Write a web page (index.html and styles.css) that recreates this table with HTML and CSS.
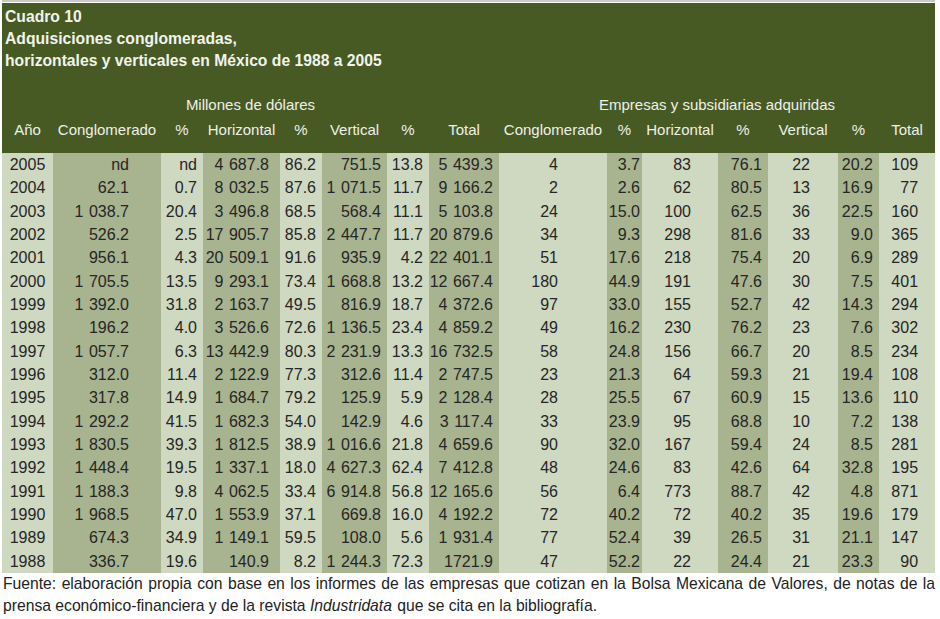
FILE: index.html
```html
<!DOCTYPE html>
<html lang="es">
<head>
<meta charset="utf-8">
<title>Cuadro 10</title>
<link rel="stylesheet" href="styles.css">
</head>
<body>
<div class="sheet">
  <div class="head">
    <div class="title">
      <div>Cuadro 10</div>
      <div>Adquisiciones conglomeradas,</div>
      <div>horizontales y verticales en México de 1988 a 2005</div>
    </div>
  </div>
  <table class="tbl">
    <colgroup>
      <col class="c1"><col class="c2"><col class="c3"><col class="c4"><col class="c5">
      <col class="c6"><col class="c7"><col class="c8"><col class="c9"><col class="c10">
      <col class="c11"><col class="c12"><col class="c13"><col class="c14"><col class="c15">
    </colgroup>
    <thead>
      <tr class="group">
        <th colspan="8">Millones de dólares</th>
        <th colspan="7">Empresas y subsidiarias adquiridas</th>
      </tr>
      <tr class="labels">
        <th>Año</th><th>Conglomerado</th><th>%</th><th>Horizontal</th><th>%</th><th>Vertical</th><th>%</th><th>Total</th>
        <th>Conglomerado</th><th>%</th><th>Horizontal</th><th>%</th><th>Vertical</th><th>%</th><th>Total</th>
      </tr>
    </thead>
    <tbody>
      <tr><td>2005</td><td>nd</td><td>nd</td><td>4 687.8</td><td>86.2</td><td>751.5</td><td>13.8</td><td>5 439.3</td><td>4</td><td>3.7</td><td>83</td><td>76.1</td><td>22</td><td>20.2</td><td>109</td></tr>
      <tr><td>2004</td><td>62.1</td><td>0.7</td><td>8 032.5</td><td>87.6</td><td>1 071.5</td><td>11.7</td><td>9 166.2</td><td>2</td><td>2.6</td><td>62</td><td>80.5</td><td>13</td><td>16.9</td><td>77</td></tr>
      <tr><td>2003</td><td>1 038.7</td><td>20.4</td><td>3 496.8</td><td>68.5</td><td>568.4</td><td>11.1</td><td>5 103.8</td><td>24</td><td>15.0</td><td>100</td><td>62.5</td><td>36</td><td>22.5</td><td>160</td></tr>
      <tr><td>2002</td><td>526.2</td><td>2.5</td><td>17 905.7</td><td>85.8</td><td>2 447.7</td><td>11.7</td><td>20 879.6</td><td>34</td><td>9.3</td><td>298</td><td>81.6</td><td>33</td><td>9.0</td><td>365</td></tr>
      <tr><td>2001</td><td>956.1</td><td>4.3</td><td>20 509.1</td><td>91.6</td><td>935.9</td><td>4.2</td><td>22 401.1</td><td>51</td><td>17.6</td><td>218</td><td>75.4</td><td>20</td><td>6.9</td><td>289</td></tr>
      <tr><td>2000</td><td>1 705.5</td><td>13.5</td><td>9 293.1</td><td>73.4</td><td>1 668.8</td><td>13.2</td><td>12 667.4</td><td>180</td><td>44.9</td><td>191</td><td>47.6</td><td>30</td><td>7.5</td><td>401</td></tr>
      <tr><td>1999</td><td>1 392.0</td><td>31.8</td><td>2 163.7</td><td>49.5</td><td>816.9</td><td>18.7</td><td>4 372.6</td><td>97</td><td>33.0</td><td>155</td><td>52.7</td><td>42</td><td>14.3</td><td>294</td></tr>
      <tr><td>1998</td><td>196.2</td><td>4.0</td><td>3 526.6</td><td>72.6</td><td>1 136.5</td><td>23.4</td><td>4 859.2</td><td>49</td><td>16.2</td><td>230</td><td>76.2</td><td>23</td><td>7.6</td><td>302</td></tr>
      <tr><td>1997</td><td>1 057.7</td><td>6.3</td><td>13 442.9</td><td>80.3</td><td>2 231.9</td><td>13.3</td><td>16 732.5</td><td>58</td><td>24.8</td><td>156</td><td>66.7</td><td>20</td><td>8.5</td><td>234</td></tr>
      <tr><td>1996</td><td>312.0</td><td>11.4</td><td>2 122.9</td><td>77.3</td><td>312.6</td><td>11.4</td><td>2 747.5</td><td>23</td><td>21.3</td><td>64</td><td>59.3</td><td>21</td><td>19.4</td><td>108</td></tr>
      <tr><td>1995</td><td>317.8</td><td>14.9</td><td>1 684.7</td><td>79.2</td><td>125.9</td><td>5.9</td><td>2 128.4</td><td>28</td><td>25.5</td><td>67</td><td>60.9</td><td>15</td><td>13.6</td><td>110</td></tr>
      <tr><td>1994</td><td>1 292.2</td><td>41.5</td><td>1 682.3</td><td>54.0</td><td>142.9</td><td>4.6</td><td>3 117.4</td><td>33</td><td>23.9</td><td>95</td><td>68.8</td><td>10</td><td>7.2</td><td>138</td></tr>
      <tr><td>1993</td><td>1 830.5</td><td>39.3</td><td>1 812.5</td><td>38.9</td><td>1 016.6</td><td>21.8</td><td>4 659.6</td><td>90</td><td>32.0</td><td>167</td><td>59.4</td><td>24</td><td>8.5</td><td>281</td></tr>
      <tr><td>1992</td><td>1 448.4</td><td>19.5</td><td>1 337.1</td><td>18.0</td><td>4 627.3</td><td>62.4</td><td>7 412.8</td><td>48</td><td>24.6</td><td>83</td><td>42.6</td><td>64</td><td>32.8</td><td>195</td></tr>
      <tr><td>1991</td><td>1 188.3</td><td>9.8</td><td>4 062.5</td><td>33.4</td><td>6 914.8</td><td>56.8</td><td>12 165.6</td><td>56</td><td>6.4</td><td>773</td><td>88.7</td><td>42</td><td>4.8</td><td>871</td></tr>
      <tr><td>1990</td><td>1 968.5</td><td>47.0</td><td>1 553.9</td><td>37.1</td><td>669.8</td><td>16.0</td><td>4 192.2</td><td>72</td><td>40.2</td><td>72</td><td>40.2</td><td>35</td><td>19.6</td><td>179</td></tr>
      <tr><td>1989</td><td>674.3</td><td>34.9</td><td>1 149.1</td><td>59.5</td><td>108.0</td><td>5.6</td><td>1 931.4</td><td>77</td><td>52.4</td><td>39</td><td>26.5</td><td>31</td><td>21.1</td><td>147</td></tr>
      <tr><td>1988</td><td>336.7</td><td>19.6</td><td>140.9</td><td>8.2</td><td>1 244.3</td><td>72.3</td><td>1721.9</td><td>47</td><td>52.2</td><td>22</td><td>24.4</td><td>21</td><td>23.3</td><td>90</td></tr>
    </tbody>
  </table>
  <p class="note">Fuente: elaboración propia con base en los informes de las empresas que cotizan en la Bolsa Mexicana de Valores, de notas de la prensa económico-financiera y de la revista <em>Industridata</em> que se cita en la bibliografía.</p>
</div>
</body>
</html>
```

FILE: styles.css
```css
html, body {
  margin: 0;
  padding: 0;
  background: #ffffff;
}

body {
  font-family: "Liberation Sans", Arial, Helvetica, sans-serif;
  color: #262626;
}

.sheet {
  width: 933px;
  margin-left: 2px;
  border-top: 2px solid #c8ccc0;
  padding-top: 1px;
}

.head {
  background: #475a24;
  color: #f1f3ec;
  padding: 3px 0 0 3px;
  height: 91px;
  box-sizing: border-box;
}

.title {
  font-weight: bold;
  font-size: 15.7px;
  line-height: 22px;
}

.tbl {
  width: 933px;
  border-collapse: collapse;
  table-layout: fixed;
  font-size: 16px;
}

.c1 { width: 51px; }
.c2 { width: 108px; }
.c3 { width: 42px; }
.c4 { width: 77px; }
.c5 { width: 42px; }
.c6 { width: 65px; }
.c7 { width: 42px; }
.c8 { width: 70px; }
.c9 { width: 108px; }
.c10 { width: 35px; }
.c11 { width: 76px; }
.c12 { width: 50px; }
.c13 { width: 70px; }
.c14 { width: 41px; }
.c15 { width: 56px; }

.tbl thead th {
  background: #475a24;
  color: #eef0e8;
  font-weight: normal;
  font-size: 15px;
  text-align: center;
  padding: 0;
  white-space: nowrap;
}

.group th {
  height: 24px;
  vertical-align: top;
  line-height: 22px;
}

.labels th {
  height: 35px;
  vertical-align: top;
  line-height: 24px;
}

.tbl tbody td {
  height: 23.33px;
  padding: 0 6px 0 0;
  line-height: 23px;
  text-align: right;
  white-space: nowrap;
  word-spacing: 1px;
}

.tbl tbody td:nth-child(odd) { background: #cfd8c1; }
.tbl tbody td:nth-child(even) { background: #a8b38f; }
.tbl tbody td:nth-child(1) { background: #cfd8c1; text-align: center; padding: 0; }

.tbl tbody td:nth-child(2) { padding-right: 32px; }
.tbl tbody td:nth-child(4) { padding-right: 11px; }
.tbl tbody td:nth-child(9) { padding-right: 49px; }
.tbl tbody td:nth-child(10) { padding-right: 2px; }
.tbl tbody td:nth-child(11) { padding-right: 27px; }
.tbl tbody td:nth-child(13) { padding-right: 28px; }
.tbl tbody td:nth-child(15) { padding-right: 17px; }

.note {
  margin: 0;
  padding: 0 0 0 1px;
  font-size: 15.7px;
  line-height: 22px;
  text-align: justify;
  color: #222;
}

.note em { font-style: italic; padding-right: 1px; }
```
